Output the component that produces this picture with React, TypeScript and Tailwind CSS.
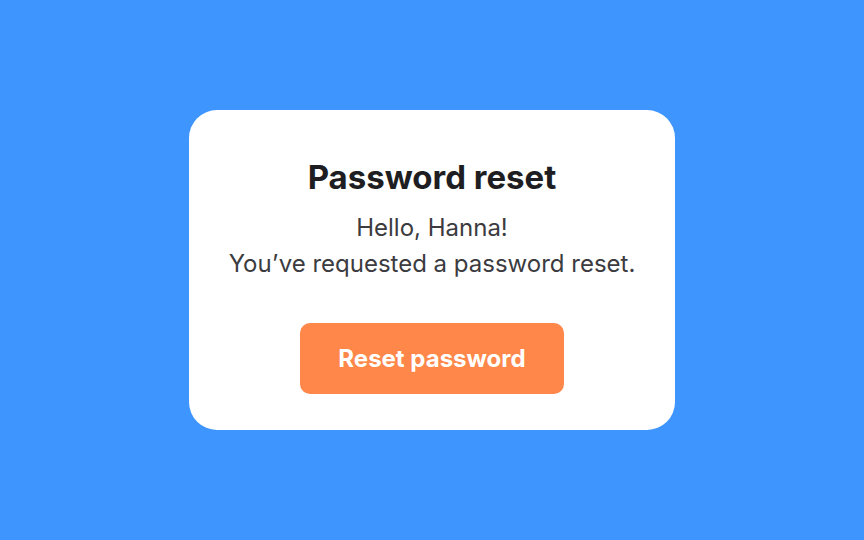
export default function App() {
  return (
    <div
      className="flex h-[540px] w-[864px] items-center justify-center bg-[#3e95fe]"
      style={{ fontFamily: 'Inter, "Noto Sans", sans-serif' }}
    >
      <div className="flex h-[320px] w-[486px] flex-col items-center rounded-[28px] bg-white pt-[47px]">
        <h1 className="text-[33px] font-bold leading-[40px] text-[#1e1e22]">Password reset</h1>
        <div className="mt-[13px] text-center text-[24px] leading-[36px] text-[#3b3b40]">
          <p>Hello, Hanna!</p>
          <p>You’ve requested a password reset.</p>
        </div>
        <button className="mt-[41px] h-[71px] w-[264px] rounded-[10px] bg-[#ff8749] text-[24px] font-bold text-white">
          Reset password
        </button>
      </div>
    </div>
  )
}
